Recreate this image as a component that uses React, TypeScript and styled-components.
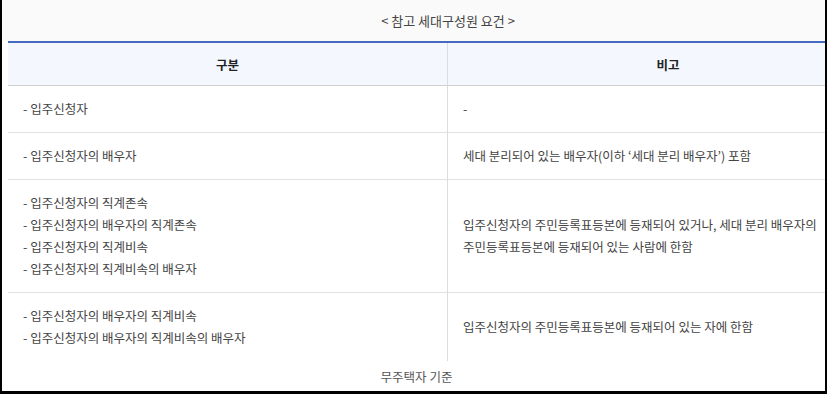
import React from "react";
import styled, { createGlobalStyle } from "styled-components";

const GlobalStyle = createGlobalStyle`
  html, body {
    margin: 0;
    padding: 0;
    background: #fff;
  }
  body {
    font-family: "Noto Sans CJK KR", "Noto Sans", sans-serif;
  }
`;

const Frame = styled.div`
  box-sizing: border-box;
  width: 827px;
  height: 394px;
  border-left: 2px solid #000;
  border-right: 2px solid #000;
  border-bottom: 3px solid #000;
  background: #fff;
  display: flex;
  flex-direction: column;
  overflow: hidden;
`;

const Scroller = styled.div`
  overflow: hidden;
`;

const Inner = styled.div`
  width: 886px;
`;

const Caption = styled.div`
  height: 41px;
  padding-left: 6px;
  background: #fafafa;
  display: flex;
  align-items: center;
  justify-content: center;
  font-size: 13px;
  color: #444;
`;

const Table = styled.div`
  margin-left: 6px;
  width: 880px;
  border-top: 2px solid #4469c1;
  display: grid;
  grid-template-columns: 440px 440px;
`;

const HeadCell = styled.div<{ $last?: boolean }>`
  height: 42px;
  background: #f4f8fe;
  border-bottom: 1px solid #cfcfcf;
  border-right: ${(p) => (p.$last ? "none" : "1px solid #dcdcdc")};
  display: flex;
  align-items: center;
  justify-content: center;
  font-size: 12.5px;
  font-weight: 700;
  color: #222;
`;

const Cell = styled.div<{ $last?: boolean; $noLine?: boolean }>`
  box-sizing: border-box;
  padding: 12px 16px 12px 15px;
  border-bottom: ${(p) => (p.$noLine ? "none" : "1px solid #e2e2e2")};
  border-right: ${(p) => (p.$last ? "none" : "1px solid #dcdcdc")};
  display: flex;
  flex-direction: column;
  justify-content: center;
  font-size: 12.5px;
  line-height: 22px;
  color: #444;
  word-break: keep-all;
`;

const Note = styled.div`
  flex: 1;
  padding-left: 6px;
  display: flex;
  align-items: center;
  justify-content: center;
  font-size: 12.5px;
  color: #555;
`;

const rows: { left: string[]; right: string; noLine?: boolean }[] = [
  { left: ["- 입주신청자"], right: "-" },
  { left: ["- 입주신청자의 배우자"], right: "세대 분리되어 있는 배우자(이하 ‘세대 분리 배우자’) 포함" },
  {
    left: [
      "- 입주신청자의 직계존속",
      "- 입주신청자의 배우자의 직계존속",
      "- 입주신청자의 직계비속",
      "- 입주신청자의 직계비속의 배우자",
    ],
    right: "입주신청자의 주민등록표등본에 등재되어 있거나, 세대 분리 배우자의 주민등록표등본에 등재되어 있는 사람에 한함",
  },
  {
    left: ["- 입주신청자의 배우자의 직계비속", "- 입주신청자의 배우자의 직계비속의 배우자"],
    right: "입주신청자의 주민등록표등본에 등재되어 있는 자에 한함",
    noLine: true,
  },
];

export default function App() {
  return (
    <>
      <GlobalStyle />
      <Frame>
        <Scroller>
          <Inner>
            <Caption>&lt; 참고 세대구성원 요건 &gt;</Caption>
            <Table>
              <HeadCell>구분</HeadCell>
              <HeadCell $last>비고</HeadCell>
              {rows.map((r, i) => (
                <React.Fragment key={i}>
                  <Cell $noLine={r.noLine}>
                    {r.left.map((l) => (
                      <div key={l}>{l}</div>
                    ))}
                  </Cell>
                  <Cell $last $noLine={r.noLine}>
                    {r.right}
                  </Cell>
                </React.Fragment>
              ))}
            </Table>
          </Inner>
        </Scroller>
        <Note>무주택자 기준</Note>
      </Frame>
    </>
  );
}
